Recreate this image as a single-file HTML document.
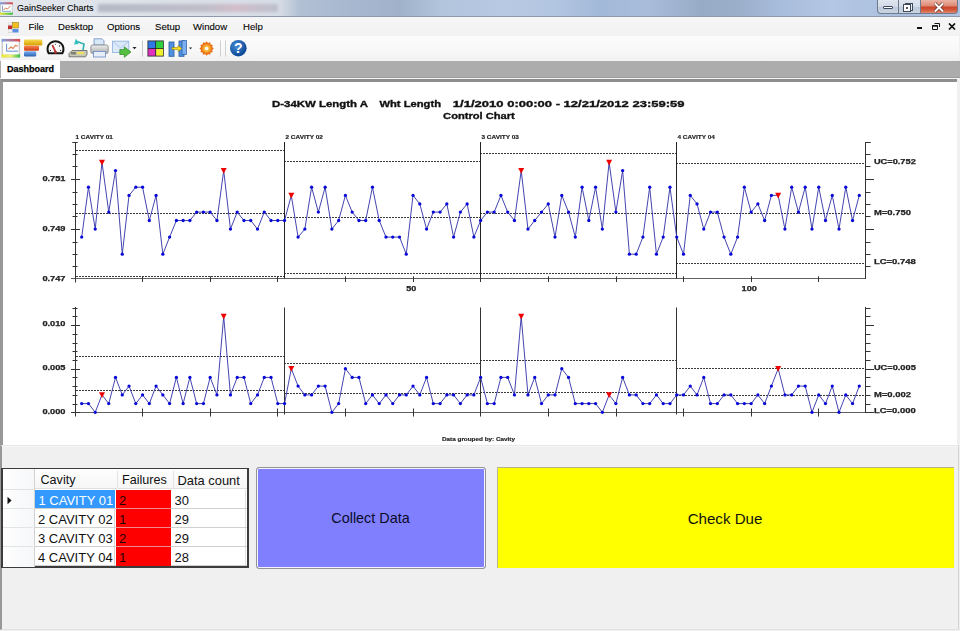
<!DOCTYPE html>
<html><head><meta charset="utf-8">
<style>
*{margin:0;padding:0;box-sizing:border-box}
html,body{width:960px;height:631px;overflow:hidden;background:#f0f0f0;font-family:"Liberation Sans",sans-serif;position:relative}
.abs{position:absolute}
#titlebar{left:0;top:0;width:960px;height:17px;background:linear-gradient(90deg,#e2e6ec 0px,#dde2e9 150px,#d6dce5 280px,#b2c0d4 300px,#a9b9d0 340px,#a0b1ca 400px,#b2c4dc 440px,#b8cae3 500px,#b3c6e1 555px,#a3b9d9 600px,#a9bddb 650px,#98abc6 700px,#9cafca 740px,#a8bcdc 780px,#b4c7e3 830px,#aabfe0 900px,#b0c4e2 960px);border-bottom:1px solid #8e9aab}
#title{left:17px;top:3px;font-size:9px;color:#000;-webkit-text-stroke:.1px #000}
#menubar{left:0;top:17px;width:960px;height:19px;background:linear-gradient(#f6f6f6,#f2f2f2)}
.mi{position:absolute;top:4px;font-size:9.6px;color:#000;line-height:11px;-webkit-text-stroke:.1px #000}
#toolbar{left:0;top:36px;width:959px;height:25px;background:linear-gradient(#fcfcfc,#f8f8f8 60%,#f1f1f1);border-radius:0 0 3px 0}
#tabstrip{left:0;top:61px;width:960px;height:17px;background:#acacac;border-bottom:1px solid #9c9c9c}
#tabline{left:0;top:78px;width:960px;height:1px;background:#f4f4f4}
#tab{left:1px;top:60px;width:59px;height:19px;background:#fff;font-weight:bold;font-size:9px;padding:4px 0 0 6px;color:#000;line-height:11px;-webkit-text-stroke:.25px #000}
#panel{left:0;top:79px;width:957px;height:366px;border-top:3px solid #8e8e8e;border-left:3px solid #989898;background:#fff}
#bottom{left:0;top:445px;width:959px;height:185px;background:#f0f0f0;border-top:1px solid #e8e8e8;box-shadow:inset 0 1px 0 #f6f6f6;border-left:2px solid #989898;border-right:1px solid #d4d4d4;border-bottom:1px solid #e2e2e2}
#grid{left:1px;top:468px;width:248px;height:100px;border:2px solid #3c3c3c;border-width:1px 2px 2px 2px;background:#fff;font-size:12.6px;color:#111}
.cell{position:absolute;height:19px;line-height:19px;white-space:nowrap;overflow:hidden}
#collect{left:256px;top:467px;width:230px;height:102px;border:1px solid #939393;border-radius:3px;background:#8080ff;box-shadow:inset 0 0 0 1px #f4f4ff;font-size:14.4px;color:#0a0a2a;text-align:center;line-height:100px;padding-right:1px}
#due{left:497px;top:467px;width:457px;height:101px;background:#ffff00;border-top:1px solid #b4b488;border-left:1px solid #b8b890;font-size:15.1px;color:#111;text-align:center;line-height:101px;padding-right:2px}
.wb{position:absolute;top:0;height:14px;border:1px solid #6f7b8a;border-top:none}
</style></head><body>
<div id="titlebar" class="abs"></div>
<svg class="abs" style="left:0;top:2px" width="14" height="13" viewBox="0 0 14 13">
 <defs><linearGradient id="ib" x1="0" y1="0" x2="1" y2="0"><stop offset="0" stop-color="#7aa2e6"/><stop offset="1" stop-color="#e04848"/></linearGradient>
 <linearGradient id="ib2" x1="0" y1="0" x2="1" y2="0"><stop offset="0" stop-color="#e8e830"/><stop offset="1" stop-color="#30c040"/></linearGradient></defs>
 <rect x="0" y="0.3" width="12.8" height="12.4" rx="1" fill="#c8ccd0"/>
 <rect x="0" y="0.3" width="12.8" height="2.2" fill="url(#ib)"/>
 <rect x="0" y="10.5" width="12.8" height="2.2" fill="url(#ib2)"/>
 <rect x="1" y="2.5" width="10.8" height="8" fill="#fdfdfd"/>
 <path d="M3.5 8 L5.5 6 L7.5 7 L10.5 4" fill="none" stroke="#d07040" stroke-width=".9"/>
 <path d="M2.5 3.5 V9.3 H11" fill="none" stroke="#5080c0" stroke-width=".7"/>
</svg>
<div id="title" class="abs">GainSeeker Charts</div>
<div class="abs" style="left:98px;top:4px;width:180px;height:8px;background:linear-gradient(90deg,rgba(130,135,150,.45),rgba(150,140,160,.4) 60%,rgba(200,130,150,.35) 75%,rgba(150,150,170,.4));filter:blur(1.6px)"></div>
<div class="wb" style="left:877px;width:22px;border-radius:0 0 0 4px;background:linear-gradient(#dfe6ef,#d2dbe7 50%,#bccadb 55%,#c8d4e2)"></div>
<div class="wb" style="left:898px;width:23px;background:linear-gradient(#dfe6ef,#d2dbe7 50%,#bccadb 55%,#c8d4e2)"></div>
<div class="wb" style="left:920px;width:38px;border-radius:0 0 4px 0;background:linear-gradient(#eab4a6,#de8a74 45%,#c8442a 55%,#d65d40 80%,#e08a70)"></div>
<div class="abs" style="left:883px;top:6px;width:10px;height:3px;border:1px solid #3e4a5c;background:#fff;border-radius:1px"></div>
<div class="abs" style="left:905px;top:3px;width:8px;height:8px;border:1px solid #3e4a5c;background:#e8eef5"></div>
<div class="abs" style="left:903px;top:4px;width:8px;height:8px;border:1px solid #3e4a5c;background:#fff"><div class="abs" style="left:2px;top:2px;width:2px;height:2px;background:#556"></div></div>
<svg class="abs" style="left:932px;top:2px" width="14" height="11" viewBox="0 0 14 11"><path d="M3 1.5 L11 9.5 M11 1.5 L3 9.5" stroke="#5a2a20" stroke-width="3.2"/><path d="M3 1.5 L11 9.5 M11 1.5 L3 9.5" stroke="#fff" stroke-width="2"/></svg>
<div id="menubar" class="abs">
 <svg class="abs" style="left:8px;top:4.5px" width="11" height="11" viewBox="0 0 11 11">
  <rect x="0" y="0" width="4" height="3" fill="#f4f4f4" stroke="#c0c0c0" stroke-width=".5"/>
  <rect x="0" y="3.5" width="4" height="3.5" fill="#c03030"/>
  <rect x="0" y="7.5" width="4" height="3" fill="#f4f4f4" stroke="#c0c0c0" stroke-width=".5"/>
  <rect x="4.5" y="0.5" width="6" height="5.5" fill="#f0c020" stroke="#a08020" stroke-width=".6"/>
  <rect x="4.5" y="7" width="6" height="3.5" fill="#5a8ee0"/>
 </svg>
 <span class="mi" style="left:28.5px">File</span>
 <span class="mi" style="left:58px">Desktop</span>
 <span class="mi" style="left:107px">Options</span>
 <span class="mi" style="left:155px">Setup</span>
 <span class="mi" style="left:193px">Window</span>
 <span class="mi" style="left:243px">Help</span>
 <div class="abs" style="left:917px;top:10px;width:5px;height:2px;background:#111"></div>
 <svg class="abs" style="left:932px;top:6px" width="8" height="7" viewBox="0 0 8 7"><path d="M2.5 .5 H7.5 V4 M.5 2.5 H5.5 V6.5 H.5 Z" fill="none" stroke="#111" stroke-width="1"/><path d="M.5 3 H5.5" stroke="#111" stroke-width="1.4"/></svg>
 <svg class="abs" style="left:948px;top:6px" width="8" height="7" viewBox="0 0 8 7"><path d="M1 .5 L7 6.5 M7 .5 L1 6.5" stroke="#111" stroke-width="1.7"/></svg>
</div>
<div id="toolbar" class="abs"></div>
<svg class="abs" style="left:0;top:36px" width="260" height="25" viewBox="0 36 260 25">
<defs>
 <linearGradient id="t1" x1="0" y1="0" x2="1" y2="0"><stop offset="0" stop-color="#7aa2e6"/><stop offset="1" stop-color="#e04848"/></linearGradient>
 <linearGradient id="t1b" x1="0" y1="0" x2="1" y2="0"><stop offset="0" stop-color="#e8e830"/><stop offset=".5" stop-color="#f0f080"/><stop offset="1" stop-color="#30c040"/></linearGradient>
 <linearGradient id="ty" x1="0" y1="0" x2="0" y2="1"><stop offset="0" stop-color="#f6d850"/><stop offset="1" stop-color="#d8a000"/></linearGradient>
 <linearGradient id="to" x1="0" y1="0" x2="0" y2="1"><stop offset="0" stop-color="#f88050"/><stop offset="1" stop-color="#d03c10"/></linearGradient>
 <linearGradient id="tb" x1="0" y1="0" x2="0" y2="1"><stop offset="0" stop-color="#80b0f0"/><stop offset="1" stop-color="#2860b0"/></linearGradient>
 <linearGradient id="tp" x1="0" y1="0" x2="0" y2="1"><stop offset="0" stop-color="#f0f0f0"/><stop offset="1" stop-color="#a8a8a8"/></linearGradient>
 <radialGradient id="ts" cx=".5" cy=".5" r=".5"><stop offset=".22" stop-color="#fff"/><stop offset=".4" stop-color="#fcc040"/><stop offset="1" stop-color="#e87010"/></radialGradient>
 <radialGradient id="th" cx=".4" cy=".35" r=".6"><stop offset="0" stop-color="#4a90d8"/><stop offset="1" stop-color="#0d4a98"/></radialGradient>
</defs>
<!-- icon1 chart -->
<rect x="1.6" y="38.9" width="18.5" height="18.6" rx="1" fill="#c8c8c8"/>
<rect x="1.6" y="38.9" width="18.5" height="3" fill="url(#t1)"/>
<rect x="1.6" y="54.3" width="18.5" height="3.2" fill="url(#t1b)"/>
<rect x="3" y="41.5" width="15.7" height="12.8" fill="#fdfdfd"/>
<path d="M6.6 43.8 V51.2 H18" fill="none" stroke="#5f8fd0" stroke-width="1"/>
<path d="M8.5 49.2 L11 47 L13 48.5 L15.5 45.5 L17.8 46.2" fill="none" stroke="#d88050" stroke-width="1.1"/>
<!-- icon2 bars -->
<rect x="24" y="39.6" width="18.3" height="5.8" rx="1.2" fill="url(#ty)"/>
<rect x="24" y="45.8" width="15" height="5" rx="1.2" fill="url(#to)"/>
<rect x="24" y="51.2" width="12.2" height="5.3" rx="1.2" fill="url(#tb)"/>
<!-- icon3 gauge -->
<path d="M48.6 53.2 A8 8 0 1 1 62.4 53.2 Z" fill="#fafafa" stroke="#151515" stroke-width="2"/>
<path d="M52.3 45 L55.8 52.3" stroke="#c03838" stroke-width="1.8"/>
<circle cx="55.5" cy="52.2" r="1.5" fill="#a03030"/>
<circle cx="50.5" cy="50.5" r=".7" fill="#333"/><circle cx="60.5" cy="50.5" r=".7" fill="#333"/><circle cx="59.5" cy="46" r=".7" fill="#333"/><circle cx="55.5" cy="44.3" r=".6" fill="#555"/>
<!-- icon4 scanner -->
<path d="M69 53.5 L72 50.5 H87 V54.5 L85.5 56.8 H69 Z" fill="#c8c8b8" stroke="#606060" stroke-width=".8"/>
<rect x="71" y="52" width="5" height="2.5" fill="#808070"/>
<rect x="77" y="52" width="7" height="2.2" fill="#f0e060"/>
<path d="M76 41 L81 43 L84 44 L83 50" fill="none" stroke="#30b0b0" stroke-width="1.6"/>
<path d="M74 44.5 L76 38.5 L78.5 44 Z" fill="#30c0c0"/>
<!-- icon5 printer -->
<path d="M94 38.8 H102 L104 40.8 V45 H94 Z" fill="#d8e8f8" stroke="#7090c0" stroke-width=".8"/>
<rect x="90.8" y="45" width="17.4" height="8.5" rx="2" fill="url(#tp)" stroke="#808080" stroke-width=".8"/>
<rect x="93.5" y="51.5" width="12" height="5.5" fill="#e8eef8" stroke="#6a8ac8" stroke-width=".8"/>
<!-- icon6 mail -->
<rect x="112.5" y="41.2" width="16.3" height="11.3" fill="#dce9fa" stroke="#9dbbe3" stroke-width="1"/>
<path d="M112.8 41.5 L120.6 47.8 L128.5 41.5" fill="none" stroke="#a8c4ea" stroke-width=".9"/>
<path d="M119.8 49.6 H124.3 V46.8 L131 52 L124.3 57.3 V54.5 H119.8 Z" fill="#56c040" stroke="#2e8a2a" stroke-width=".7"/>
<path d="M132.5 47 H136.5 L134.5 49.3 Z" fill="#222"/>
<!-- separator -->
<rect x="142" y="40.5" width="1" height="16" fill="#c8c8c8"/>
<!-- icon squares -->
<rect x="147.5" y="40.5" width="16.3" height="16" fill="#222"/>
<rect x="148.3" y="41.3" width="7" height="6.8" fill="#2f78e8"/>
<rect x="156.1" y="41.3" width="7" height="6.8" fill="#30d040"/>
<rect x="148.3" y="48.9" width="7" height="6.8" fill="#e030c0"/>
<rect x="156.1" y="48.9" width="7" height="6.8" fill="#f0f030"/>
<!-- icon H -->
<rect x="169" y="42" width="5" height="14.3" fill="#5090e0" stroke="#2a5aa0" stroke-width=".8"/>
<rect x="179" y="41" width="5" height="15.3" fill="#5090e0" stroke="#2a5aa0" stroke-width=".8"/>
<rect x="182" y="40.5" width="4.5" height="14" fill="#7ab0f0" stroke="#2a5aa0" stroke-width=".7"/>
<path d="M172 47.5 H178 V45.5 L182 48.5 L178 51.5 V49.5 H172 Z" fill="#f0e020" stroke="#907000" stroke-width=".5"/>
<path d="M189 47.5 H192.2 L190.6 49.3 Z" fill="#222"/>
<!-- sun -->
<path d="M213.80 48.50 L212.01 49.95 L212.84 52.10 L210.56 52.46 L210.20 54.74 L208.05 53.91 L206.60 55.70 L205.15 53.91 L203.00 54.74 L202.64 52.46 L200.36 52.10 L201.19 49.95 L199.40 48.50 L201.19 47.05 L200.36 44.90 L202.64 44.54 L203.00 42.26 L205.15 43.09 L206.60 41.30 L208.05 43.09 L210.20 42.26 L210.56 44.54 L212.84 44.90 L212.01 47.05Z" fill="#e86a10"/>
<circle cx="206.6" cy="48.5" r="5.4" fill="url(#ts)"/>
<!-- separators -->
<rect x="220" y="40.5" width="1" height="16" fill="#d0d0d0"/>
<rect x="225" y="40.5" width="1" height="16" fill="#d0d0d0"/>
<!-- help -->
<circle cx="238.3" cy="48.2" r="8.3" fill="url(#th)"/>
<text x="238.3" y="53.3" font-size="14" font-weight="bold" fill="#fff" text-anchor="middle" font-family="Liberation Sans">?</text>
</svg>

<div id="tabstrip" class="abs"></div>
<div id="tabline" class="abs"></div>
<div id="tab" class="abs">Dashboard</div>
<div id="panel" class="abs"></div>
<div id="bottom" class="abs"></div>
<svg class="chart" width="960" height="631" viewBox="0 0 960 631" style="position:absolute;left:0;top:0;will-change:transform;font-family:'Liberation Sans',sans-serif"><line x1="76" y1="150.5" x2="284" y2="150.5" stroke="#3a3a3a" stroke-dasharray="2 1"/><line x1="76" y1="213.5" x2="284" y2="213.5" stroke="#3a3a3a" stroke-dasharray="2 1"/><line x1="76" y1="276.5" x2="284" y2="276.5" stroke="#3a3a3a" stroke-dasharray="2 1"/><line x1="76" y1="356.5" x2="284" y2="356.5" stroke="#3a3a3a" stroke-dasharray="2 1"/><line x1="76" y1="390.5" x2="284" y2="390.5" stroke="#3a3a3a" stroke-dasharray="2 1"/><line x1="284" y1="161.5" x2="480" y2="161.5" stroke="#3a3a3a" stroke-dasharray="2 1"/><line x1="284" y1="217.5" x2="480" y2="217.5" stroke="#3a3a3a" stroke-dasharray="2 1"/><line x1="284" y1="273.5" x2="480" y2="273.5" stroke="#3a3a3a" stroke-dasharray="2 1"/><line x1="284" y1="363.5" x2="480" y2="363.5" stroke="#3a3a3a" stroke-dasharray="2 1"/><line x1="284" y1="393.5" x2="480" y2="393.5" stroke="#3a3a3a" stroke-dasharray="2 1"/><line x1="480" y1="153.5" x2="676" y2="153.5" stroke="#3a3a3a" stroke-dasharray="2 1"/><line x1="480" y1="213.5" x2="676" y2="213.5" stroke="#3a3a3a" stroke-dasharray="2 1"/><line x1="480" y1="273.5" x2="676" y2="273.5" stroke="#3a3a3a" stroke-dasharray="2 1"/><line x1="480" y1="360.5" x2="676" y2="360.5" stroke="#3a3a3a" stroke-dasharray="2 1"/><line x1="480" y1="392.5" x2="676" y2="392.5" stroke="#3a3a3a" stroke-dasharray="2 1"/><line x1="676" y1="163.5" x2="866" y2="163.5" stroke="#3a3a3a" stroke-dasharray="2 1"/><line x1="676" y1="213.5" x2="866" y2="213.5" stroke="#3a3a3a" stroke-dasharray="2 1"/><line x1="676" y1="263.5" x2="866" y2="263.5" stroke="#3a3a3a" stroke-dasharray="2 1"/><line x1="676" y1="368.5" x2="866" y2="368.5" stroke="#3a3a3a" stroke-dasharray="2 1"/><line x1="676" y1="395.5" x2="866" y2="395.5" stroke="#3a3a3a" stroke-dasharray="2 1"/><line x1="71" y1="278.5" x2="865.5" y2="278.5" stroke="#606060"/><line x1="75.5" y1="142" x2="75.5" y2="282.5" stroke="#333333"/><line x1="865.5" y1="142" x2="865.5" y2="279" stroke="#333333"/><line x1="284.5" y1="142" x2="284.5" y2="278.5" stroke="#222"/><line x1="480.5" y1="142" x2="480.5" y2="278.5" stroke="#222"/><line x1="676.5" y1="142" x2="676.5" y2="278.5" stroke="#222"/><line x1="72.5" y1="142.5" x2="77.5" y2="142.5" stroke="#333333"/><line x1="865.5" y1="142.5" x2="870.5" y2="142.5" stroke="#333333"/><line x1="72.5" y1="154.5" x2="77.5" y2="154.5" stroke="#333333"/><line x1="865.5" y1="154.5" x2="870.5" y2="154.5" stroke="#333333"/><line x1="72.5" y1="166.5" x2="77.5" y2="166.5" stroke="#333333"/><line x1="865.5" y1="166.5" x2="870.5" y2="166.5" stroke="#333333"/><line x1="71" y1="179.5" x2="80" y2="179.5" stroke="#333333"/><line x1="865.5" y1="179.5" x2="874" y2="179.5" stroke="#333333"/><line x1="72.5" y1="192.5" x2="77.5" y2="192.5" stroke="#333333"/><line x1="865.5" y1="192.5" x2="870.5" y2="192.5" stroke="#333333"/><line x1="72.5" y1="204.5" x2="77.5" y2="204.5" stroke="#333333"/><line x1="865.5" y1="204.5" x2="870.5" y2="204.5" stroke="#333333"/><line x1="72.5" y1="216.5" x2="77.5" y2="216.5" stroke="#333333"/><line x1="865.5" y1="216.5" x2="870.5" y2="216.5" stroke="#333333"/><line x1="71" y1="229.5" x2="80" y2="229.5" stroke="#333333"/><line x1="865.5" y1="229.5" x2="874" y2="229.5" stroke="#333333"/><line x1="72.5" y1="242.5" x2="77.5" y2="242.5" stroke="#333333"/><line x1="865.5" y1="242.5" x2="870.5" y2="242.5" stroke="#333333"/><line x1="72.5" y1="254.5" x2="77.5" y2="254.5" stroke="#333333"/><line x1="865.5" y1="254.5" x2="870.5" y2="254.5" stroke="#333333"/><line x1="72.5" y1="266.5" x2="77.5" y2="266.5" stroke="#333333"/><line x1="865.5" y1="266.5" x2="870.5" y2="266.5" stroke="#333333"/><line x1="72.5" y1="142.5" x2="77.5" y2="142.5" stroke="#333333"/><line x1="865.5" y1="142.5" x2="870.5" y2="142.5" stroke="#333333"/><line x1="142.5" y1="276.3" x2="142.5" y2="282" stroke="#333333"/><line x1="210.5" y1="276.3" x2="210.5" y2="282" stroke="#333333"/><line x1="277.5" y1="276.3" x2="277.5" y2="282" stroke="#333333"/><line x1="345.5" y1="276.3" x2="345.5" y2="282" stroke="#333333"/><line x1="413.5" y1="276.3" x2="413.5" y2="282" stroke="#333333"/><line x1="480.5" y1="276.3" x2="480.5" y2="282" stroke="#333333"/><line x1="548.5" y1="276.3" x2="548.5" y2="282" stroke="#333333"/><line x1="616.5" y1="276.3" x2="616.5" y2="282" stroke="#333333"/><line x1="683.5" y1="276.3" x2="683.5" y2="282" stroke="#333333"/><line x1="751.5" y1="276.3" x2="751.5" y2="282" stroke="#333333"/><line x1="818.5" y1="276.3" x2="818.5" y2="282" stroke="#333333"/><line x1="71" y1="412.5" x2="865.5" y2="412.5" stroke="#606060"/><line x1="75.5" y1="307" x2="75.5" y2="416.5" stroke="#333333"/><line x1="865.5" y1="307" x2="865.5" y2="413" stroke="#333333"/><line x1="284.5" y1="307.5" x2="284.5" y2="414.5" stroke="#333"/><line x1="480.5" y1="307.5" x2="480.5" y2="414.5" stroke="#333"/><line x1="676.5" y1="307.5" x2="676.5" y2="414.5" stroke="#333"/><line x1="71" y1="412.5" x2="80" y2="412.5" stroke="#333333"/><line x1="865.5" y1="412.5" x2="874" y2="412.5" stroke="#333333"/><line x1="72.5" y1="404.5" x2="77.5" y2="404.5" stroke="#333333"/><line x1="865.5" y1="404.5" x2="870.5" y2="404.5" stroke="#333333"/><line x1="72.5" y1="395.5" x2="77.5" y2="395.5" stroke="#333333"/><line x1="865.5" y1="395.5" x2="870.5" y2="395.5" stroke="#333333"/><line x1="72.5" y1="386.5" x2="77.5" y2="386.5" stroke="#333333"/><line x1="865.5" y1="386.5" x2="870.5" y2="386.5" stroke="#333333"/><line x1="72.5" y1="377.5" x2="77.5" y2="377.5" stroke="#333333"/><line x1="865.5" y1="377.5" x2="870.5" y2="377.5" stroke="#333333"/><line x1="71" y1="369.5" x2="80" y2="369.5" stroke="#333333"/><line x1="865.5" y1="369.5" x2="874" y2="369.5" stroke="#333333"/><line x1="72.5" y1="360.5" x2="77.5" y2="360.5" stroke="#333333"/><line x1="865.5" y1="360.5" x2="870.5" y2="360.5" stroke="#333333"/><line x1="72.5" y1="351.5" x2="77.5" y2="351.5" stroke="#333333"/><line x1="865.5" y1="351.5" x2="870.5" y2="351.5" stroke="#333333"/><line x1="72.5" y1="343.5" x2="77.5" y2="343.5" stroke="#333333"/><line x1="865.5" y1="343.5" x2="870.5" y2="343.5" stroke="#333333"/><line x1="72.5" y1="334.5" x2="77.5" y2="334.5" stroke="#333333"/><line x1="865.5" y1="334.5" x2="870.5" y2="334.5" stroke="#333333"/><line x1="71" y1="325.5" x2="80" y2="325.5" stroke="#333333"/><line x1="865.5" y1="325.5" x2="874" y2="325.5" stroke="#333333"/><line x1="72.5" y1="316.5" x2="77.5" y2="316.5" stroke="#333333"/><line x1="865.5" y1="316.5" x2="870.5" y2="316.5" stroke="#333333"/><line x1="72.5" y1="308.5" x2="77.5" y2="308.5" stroke="#333333"/><line x1="865.5" y1="308.5" x2="870.5" y2="308.5" stroke="#333333"/><line x1="142.5" y1="408.5" x2="142.5" y2="416.5" stroke="#333333"/><line x1="210.5" y1="408.5" x2="210.5" y2="416.5" stroke="#333333"/><line x1="277.5" y1="408.5" x2="277.5" y2="416.5" stroke="#333333"/><line x1="345.5" y1="408.5" x2="345.5" y2="416.5" stroke="#333333"/><line x1="413.5" y1="408.5" x2="413.5" y2="416.5" stroke="#333333"/><line x1="480.5" y1="408.5" x2="480.5" y2="416.5" stroke="#333333"/><line x1="548.5" y1="408.5" x2="548.5" y2="416.5" stroke="#333333"/><line x1="616.5" y1="408.5" x2="616.5" y2="416.5" stroke="#333333"/><line x1="683.5" y1="408.5" x2="683.5" y2="416.5" stroke="#333333"/><line x1="751.5" y1="408.5" x2="751.5" y2="416.5" stroke="#333333"/><line x1="818.5" y1="408.5" x2="818.5" y2="416.5" stroke="#333333"/><polyline points="81.70,237.1 88.46,187.2 95.23,229.1 101.99,162.3 108.75,212.1 115.51,170.6 122.27,254.2 129.03,195.4 135.80,187.2 142.56,187.2 149.32,220.5 156.08,195.4 162.84,254.2 169.60,237.1 176.37,220.5 183.13,220.5 189.89,220.5 196.65,212.1 203.41,212.1 210.17,212.1 216.94,220.5 223.70,170.6 230.46,229.1 237.22,212.1 243.98,220.5 250.74,220.5 257.51,229.1 264.27,212.1 271.03,220.5 277.79,220.5 284.55,220.5 291.31,195.4 298.08,237.1 304.84,229.1 311.60,187.2 318.36,212.1 325.12,187.2 331.88,229.1 338.65,220.5 345.41,195.4 352.17,212.1 358.93,220.5 365.69,220.5 372.45,187.2 379.22,220.5 385.98,237.1 392.74,237.1 399.50,237.1 406.26,254.2 413.03,195.4 419.79,203.9 426.55,229.1 433.31,212.1 440.07,212.1 446.83,203.9 453.60,237.1 460.36,212.1 467.12,203.9 473.88,237.1 480.64,220.5 487.40,212.1 494.17,212.1 500.93,195.4 507.69,212.1 514.45,220.5 521.21,170.6 527.97,229.1 534.74,220.5 541.50,212.1 548.26,203.9 555.02,237.1 561.78,195.4 568.54,212.1 575.31,237.1 582.07,187.2 588.83,220.5 595.59,187.2 602.35,229.1 609.11,162.3 615.88,212.1 622.64,170.6 629.40,254.2 636.16,254.2 642.92,237.1 649.68,187.2 656.45,254.2 663.21,237.1 669.97,187.2 676.73,237.1 683.49,254.2 690.25,195.4 697.02,203.9 703.78,229.1 710.54,212.1 717.30,212.1 724.06,237.1 730.82,254.2 737.59,237.1 744.35,187.2 751.11,212.1 757.87,203.9 764.63,220.5 771.40,195.4 778.16,195.4 784.92,229.1 791.68,187.2 798.44,212.1 805.20,187.2 811.97,229.1 818.73,187.2 825.49,220.5 832.25,195.4 839.01,229.1 845.77,187.2 852.54,220.5 859.30,195.4" fill="none" stroke="#3a3aac" stroke-width="0.95"/><polyline points="81.70,403.6 88.46,403.6 95.23,412.3 101.99,394.9 108.75,403.6 115.51,377.4 122.27,394.9 129.03,386.1 135.80,403.6 142.56,394.9 149.32,403.6 156.08,386.1 162.84,394.9 169.60,403.6 176.37,377.4 183.13,403.6 189.89,377.4 196.65,403.6 203.41,403.6 210.17,377.4 216.94,394.9 223.70,316.4 230.46,394.9 237.22,377.4 243.98,377.4 250.74,403.6 257.51,394.9 264.27,377.4 271.03,377.4 277.79,403.6 284.55,403.6 291.31,368.7 298.08,386.1 304.84,394.9 311.60,394.9 318.36,386.1 325.12,386.1 331.88,412.3 338.65,403.6 345.41,368.7 352.17,377.4 358.93,377.4 365.69,403.6 372.45,394.9 379.22,403.6 385.98,394.9 392.74,403.6 399.50,394.9 406.26,394.9 413.03,386.1 419.79,394.9 426.55,377.4 433.31,403.6 440.07,403.6 446.83,394.9 453.60,394.9 460.36,403.6 467.12,394.9 473.88,394.9 480.64,377.4 487.40,403.6 494.17,403.6 500.93,377.4 507.69,377.4 514.45,394.9 521.21,316.4 527.97,394.9 534.74,377.4 541.50,403.6 548.26,394.9 555.02,394.9 561.78,368.7 568.54,377.4 575.31,403.6 582.07,403.6 588.83,403.6 595.59,403.6 602.35,412.3 609.11,394.9 615.88,403.6 622.64,377.4 629.40,394.9 636.16,394.9 642.92,403.6 649.68,403.6 656.45,394.9 663.21,403.6 669.97,403.6 676.73,394.9 683.49,394.9 690.25,386.1 697.02,394.9 703.78,377.4 710.54,403.6 717.30,403.6 724.06,394.9 730.82,394.9 737.59,403.6 744.35,403.6 751.11,403.6 757.87,394.9 764.63,403.6 771.40,386.1 778.16,368.7 784.92,394.9 791.68,394.9 798.44,386.1 805.20,386.1 811.97,412.3 818.73,394.9 825.49,403.6 832.25,386.1 839.01,412.3 845.77,394.9 852.54,403.6 859.30,386.1" fill="none" stroke="#3a3aac" stroke-width="0.95"/><circle cx="81.70" cy="237.1" r="1.65" fill="#0808d8"/><circle cx="81.70" cy="403.6" r="1.65" fill="#0808d8"/><circle cx="88.46" cy="187.2" r="1.65" fill="#0808d8"/><circle cx="88.46" cy="403.6" r="1.65" fill="#0808d8"/><circle cx="95.23" cy="229.1" r="1.65" fill="#0808d8"/><circle cx="95.23" cy="412.3" r="1.65" fill="#0808d8"/><circle cx="108.75" cy="212.1" r="1.65" fill="#0808d8"/><circle cx="108.75" cy="403.6" r="1.65" fill="#0808d8"/><circle cx="115.51" cy="170.6" r="1.65" fill="#0808d8"/><circle cx="115.51" cy="377.4" r="1.65" fill="#0808d8"/><circle cx="122.27" cy="254.2" r="1.65" fill="#0808d8"/><circle cx="122.27" cy="394.9" r="1.65" fill="#0808d8"/><circle cx="129.03" cy="195.4" r="1.65" fill="#0808d8"/><circle cx="129.03" cy="386.1" r="1.65" fill="#0808d8"/><circle cx="135.80" cy="187.2" r="1.65" fill="#0808d8"/><circle cx="135.80" cy="403.6" r="1.65" fill="#0808d8"/><circle cx="142.56" cy="187.2" r="1.65" fill="#0808d8"/><circle cx="142.56" cy="394.9" r="1.65" fill="#0808d8"/><circle cx="149.32" cy="220.5" r="1.65" fill="#0808d8"/><circle cx="149.32" cy="403.6" r="1.65" fill="#0808d8"/><circle cx="156.08" cy="195.4" r="1.65" fill="#0808d8"/><circle cx="156.08" cy="386.1" r="1.65" fill="#0808d8"/><circle cx="162.84" cy="254.2" r="1.65" fill="#0808d8"/><circle cx="162.84" cy="394.9" r="1.65" fill="#0808d8"/><circle cx="169.60" cy="237.1" r="1.65" fill="#0808d8"/><circle cx="169.60" cy="403.6" r="1.65" fill="#0808d8"/><circle cx="176.37" cy="220.5" r="1.65" fill="#0808d8"/><circle cx="176.37" cy="377.4" r="1.65" fill="#0808d8"/><circle cx="183.13" cy="220.5" r="1.65" fill="#0808d8"/><circle cx="183.13" cy="403.6" r="1.65" fill="#0808d8"/><circle cx="189.89" cy="220.5" r="1.65" fill="#0808d8"/><circle cx="189.89" cy="377.4" r="1.65" fill="#0808d8"/><circle cx="196.65" cy="212.1" r="1.65" fill="#0808d8"/><circle cx="196.65" cy="403.6" r="1.65" fill="#0808d8"/><circle cx="203.41" cy="212.1" r="1.65" fill="#0808d8"/><circle cx="203.41" cy="403.6" r="1.65" fill="#0808d8"/><circle cx="210.17" cy="212.1" r="1.65" fill="#0808d8"/><circle cx="210.17" cy="377.4" r="1.65" fill="#0808d8"/><circle cx="216.94" cy="220.5" r="1.65" fill="#0808d8"/><circle cx="216.94" cy="394.9" r="1.65" fill="#0808d8"/><circle cx="230.46" cy="229.1" r="1.65" fill="#0808d8"/><circle cx="230.46" cy="394.9" r="1.65" fill="#0808d8"/><circle cx="237.22" cy="212.1" r="1.65" fill="#0808d8"/><circle cx="237.22" cy="377.4" r="1.65" fill="#0808d8"/><circle cx="243.98" cy="220.5" r="1.65" fill="#0808d8"/><circle cx="243.98" cy="377.4" r="1.65" fill="#0808d8"/><circle cx="250.74" cy="220.5" r="1.65" fill="#0808d8"/><circle cx="250.74" cy="403.6" r="1.65" fill="#0808d8"/><circle cx="257.51" cy="229.1" r="1.65" fill="#0808d8"/><circle cx="257.51" cy="394.9" r="1.65" fill="#0808d8"/><circle cx="264.27" cy="212.1" r="1.65" fill="#0808d8"/><circle cx="264.27" cy="377.4" r="1.65" fill="#0808d8"/><circle cx="271.03" cy="220.5" r="1.65" fill="#0808d8"/><circle cx="271.03" cy="377.4" r="1.65" fill="#0808d8"/><circle cx="277.79" cy="220.5" r="1.65" fill="#0808d8"/><circle cx="277.79" cy="403.6" r="1.65" fill="#0808d8"/><circle cx="284.55" cy="220.5" r="1.65" fill="#0808d8"/><circle cx="284.55" cy="403.6" r="1.65" fill="#0808d8"/><circle cx="298.08" cy="237.1" r="1.65" fill="#0808d8"/><circle cx="298.08" cy="386.1" r="1.65" fill="#0808d8"/><circle cx="304.84" cy="229.1" r="1.65" fill="#0808d8"/><circle cx="304.84" cy="394.9" r="1.65" fill="#0808d8"/><circle cx="311.60" cy="187.2" r="1.65" fill="#0808d8"/><circle cx="311.60" cy="394.9" r="1.65" fill="#0808d8"/><circle cx="318.36" cy="212.1" r="1.65" fill="#0808d8"/><circle cx="318.36" cy="386.1" r="1.65" fill="#0808d8"/><circle cx="325.12" cy="187.2" r="1.65" fill="#0808d8"/><circle cx="325.12" cy="386.1" r="1.65" fill="#0808d8"/><circle cx="331.88" cy="229.1" r="1.65" fill="#0808d8"/><circle cx="331.88" cy="412.3" r="1.65" fill="#0808d8"/><circle cx="338.65" cy="220.5" r="1.65" fill="#0808d8"/><circle cx="338.65" cy="403.6" r="1.65" fill="#0808d8"/><circle cx="345.41" cy="195.4" r="1.65" fill="#0808d8"/><circle cx="345.41" cy="368.7" r="1.65" fill="#0808d8"/><circle cx="352.17" cy="212.1" r="1.65" fill="#0808d8"/><circle cx="352.17" cy="377.4" r="1.65" fill="#0808d8"/><circle cx="358.93" cy="220.5" r="1.65" fill="#0808d8"/><circle cx="358.93" cy="377.4" r="1.65" fill="#0808d8"/><circle cx="365.69" cy="220.5" r="1.65" fill="#0808d8"/><circle cx="365.69" cy="403.6" r="1.65" fill="#0808d8"/><circle cx="372.45" cy="187.2" r="1.65" fill="#0808d8"/><circle cx="372.45" cy="394.9" r="1.65" fill="#0808d8"/><circle cx="379.22" cy="220.5" r="1.65" fill="#0808d8"/><circle cx="379.22" cy="403.6" r="1.65" fill="#0808d8"/><circle cx="385.98" cy="237.1" r="1.65" fill="#0808d8"/><circle cx="385.98" cy="394.9" r="1.65" fill="#0808d8"/><circle cx="392.74" cy="237.1" r="1.65" fill="#0808d8"/><circle cx="392.74" cy="403.6" r="1.65" fill="#0808d8"/><circle cx="399.50" cy="237.1" r="1.65" fill="#0808d8"/><circle cx="399.50" cy="394.9" r="1.65" fill="#0808d8"/><circle cx="406.26" cy="254.2" r="1.65" fill="#0808d8"/><circle cx="406.26" cy="394.9" r="1.65" fill="#0808d8"/><circle cx="413.03" cy="195.4" r="1.65" fill="#0808d8"/><circle cx="413.03" cy="386.1" r="1.65" fill="#0808d8"/><circle cx="419.79" cy="203.9" r="1.65" fill="#0808d8"/><circle cx="419.79" cy="394.9" r="1.65" fill="#0808d8"/><circle cx="426.55" cy="229.1" r="1.65" fill="#0808d8"/><circle cx="426.55" cy="377.4" r="1.65" fill="#0808d8"/><circle cx="433.31" cy="212.1" r="1.65" fill="#0808d8"/><circle cx="433.31" cy="403.6" r="1.65" fill="#0808d8"/><circle cx="440.07" cy="212.1" r="1.65" fill="#0808d8"/><circle cx="440.07" cy="403.6" r="1.65" fill="#0808d8"/><circle cx="446.83" cy="203.9" r="1.65" fill="#0808d8"/><circle cx="446.83" cy="394.9" r="1.65" fill="#0808d8"/><circle cx="453.60" cy="237.1" r="1.65" fill="#0808d8"/><circle cx="453.60" cy="394.9" r="1.65" fill="#0808d8"/><circle cx="460.36" cy="212.1" r="1.65" fill="#0808d8"/><circle cx="460.36" cy="403.6" r="1.65" fill="#0808d8"/><circle cx="467.12" cy="203.9" r="1.65" fill="#0808d8"/><circle cx="467.12" cy="394.9" r="1.65" fill="#0808d8"/><circle cx="473.88" cy="237.1" r="1.65" fill="#0808d8"/><circle cx="473.88" cy="394.9" r="1.65" fill="#0808d8"/><circle cx="480.64" cy="220.5" r="1.65" fill="#0808d8"/><circle cx="480.64" cy="377.4" r="1.65" fill="#0808d8"/><circle cx="487.40" cy="212.1" r="1.65" fill="#0808d8"/><circle cx="487.40" cy="403.6" r="1.65" fill="#0808d8"/><circle cx="494.17" cy="212.1" r="1.65" fill="#0808d8"/><circle cx="494.17" cy="403.6" r="1.65" fill="#0808d8"/><circle cx="500.93" cy="195.4" r="1.65" fill="#0808d8"/><circle cx="500.93" cy="377.4" r="1.65" fill="#0808d8"/><circle cx="507.69" cy="212.1" r="1.65" fill="#0808d8"/><circle cx="507.69" cy="377.4" r="1.65" fill="#0808d8"/><circle cx="514.45" cy="220.5" r="1.65" fill="#0808d8"/><circle cx="514.45" cy="394.9" r="1.65" fill="#0808d8"/><circle cx="527.97" cy="229.1" r="1.65" fill="#0808d8"/><circle cx="527.97" cy="394.9" r="1.65" fill="#0808d8"/><circle cx="534.74" cy="220.5" r="1.65" fill="#0808d8"/><circle cx="534.74" cy="377.4" r="1.65" fill="#0808d8"/><circle cx="541.50" cy="212.1" r="1.65" fill="#0808d8"/><circle cx="541.50" cy="403.6" r="1.65" fill="#0808d8"/><circle cx="548.26" cy="203.9" r="1.65" fill="#0808d8"/><circle cx="548.26" cy="394.9" r="1.65" fill="#0808d8"/><circle cx="555.02" cy="237.1" r="1.65" fill="#0808d8"/><circle cx="555.02" cy="394.9" r="1.65" fill="#0808d8"/><circle cx="561.78" cy="195.4" r="1.65" fill="#0808d8"/><circle cx="561.78" cy="368.7" r="1.65" fill="#0808d8"/><circle cx="568.54" cy="212.1" r="1.65" fill="#0808d8"/><circle cx="568.54" cy="377.4" r="1.65" fill="#0808d8"/><circle cx="575.31" cy="237.1" r="1.65" fill="#0808d8"/><circle cx="575.31" cy="403.6" r="1.65" fill="#0808d8"/><circle cx="582.07" cy="187.2" r="1.65" fill="#0808d8"/><circle cx="582.07" cy="403.6" r="1.65" fill="#0808d8"/><circle cx="588.83" cy="220.5" r="1.65" fill="#0808d8"/><circle cx="588.83" cy="403.6" r="1.65" fill="#0808d8"/><circle cx="595.59" cy="187.2" r="1.65" fill="#0808d8"/><circle cx="595.59" cy="403.6" r="1.65" fill="#0808d8"/><circle cx="602.35" cy="229.1" r="1.65" fill="#0808d8"/><circle cx="602.35" cy="412.3" r="1.65" fill="#0808d8"/><circle cx="615.88" cy="212.1" r="1.65" fill="#0808d8"/><circle cx="615.88" cy="403.6" r="1.65" fill="#0808d8"/><circle cx="622.64" cy="170.6" r="1.65" fill="#0808d8"/><circle cx="622.64" cy="377.4" r="1.65" fill="#0808d8"/><circle cx="629.40" cy="254.2" r="1.65" fill="#0808d8"/><circle cx="629.40" cy="394.9" r="1.65" fill="#0808d8"/><circle cx="636.16" cy="254.2" r="1.65" fill="#0808d8"/><circle cx="636.16" cy="394.9" r="1.65" fill="#0808d8"/><circle cx="642.92" cy="237.1" r="1.65" fill="#0808d8"/><circle cx="642.92" cy="403.6" r="1.65" fill="#0808d8"/><circle cx="649.68" cy="187.2" r="1.65" fill="#0808d8"/><circle cx="649.68" cy="403.6" r="1.65" fill="#0808d8"/><circle cx="656.45" cy="254.2" r="1.65" fill="#0808d8"/><circle cx="656.45" cy="394.9" r="1.65" fill="#0808d8"/><circle cx="663.21" cy="237.1" r="1.65" fill="#0808d8"/><circle cx="663.21" cy="403.6" r="1.65" fill="#0808d8"/><circle cx="669.97" cy="187.2" r="1.65" fill="#0808d8"/><circle cx="669.97" cy="403.6" r="1.65" fill="#0808d8"/><circle cx="676.73" cy="237.1" r="1.65" fill="#0808d8"/><circle cx="676.73" cy="394.9" r="1.65" fill="#0808d8"/><circle cx="683.49" cy="254.2" r="1.65" fill="#0808d8"/><circle cx="683.49" cy="394.9" r="1.65" fill="#0808d8"/><circle cx="690.25" cy="195.4" r="1.65" fill="#0808d8"/><circle cx="690.25" cy="386.1" r="1.65" fill="#0808d8"/><circle cx="697.02" cy="203.9" r="1.65" fill="#0808d8"/><circle cx="697.02" cy="394.9" r="1.65" fill="#0808d8"/><circle cx="703.78" cy="229.1" r="1.65" fill="#0808d8"/><circle cx="703.78" cy="377.4" r="1.65" fill="#0808d8"/><circle cx="710.54" cy="212.1" r="1.65" fill="#0808d8"/><circle cx="710.54" cy="403.6" r="1.65" fill="#0808d8"/><circle cx="717.30" cy="212.1" r="1.65" fill="#0808d8"/><circle cx="717.30" cy="403.6" r="1.65" fill="#0808d8"/><circle cx="724.06" cy="237.1" r="1.65" fill="#0808d8"/><circle cx="724.06" cy="394.9" r="1.65" fill="#0808d8"/><circle cx="730.82" cy="254.2" r="1.65" fill="#0808d8"/><circle cx="730.82" cy="394.9" r="1.65" fill="#0808d8"/><circle cx="737.59" cy="237.1" r="1.65" fill="#0808d8"/><circle cx="737.59" cy="403.6" r="1.65" fill="#0808d8"/><circle cx="744.35" cy="187.2" r="1.65" fill="#0808d8"/><circle cx="744.35" cy="403.6" r="1.65" fill="#0808d8"/><circle cx="751.11" cy="212.1" r="1.65" fill="#0808d8"/><circle cx="751.11" cy="403.6" r="1.65" fill="#0808d8"/><circle cx="757.87" cy="203.9" r="1.65" fill="#0808d8"/><circle cx="757.87" cy="394.9" r="1.65" fill="#0808d8"/><circle cx="764.63" cy="220.5" r="1.65" fill="#0808d8"/><circle cx="764.63" cy="403.6" r="1.65" fill="#0808d8"/><circle cx="771.40" cy="195.4" r="1.65" fill="#0808d8"/><circle cx="771.40" cy="386.1" r="1.65" fill="#0808d8"/><circle cx="784.92" cy="229.1" r="1.65" fill="#0808d8"/><circle cx="784.92" cy="394.9" r="1.65" fill="#0808d8"/><circle cx="791.68" cy="187.2" r="1.65" fill="#0808d8"/><circle cx="791.68" cy="394.9" r="1.65" fill="#0808d8"/><circle cx="798.44" cy="212.1" r="1.65" fill="#0808d8"/><circle cx="798.44" cy="386.1" r="1.65" fill="#0808d8"/><circle cx="805.20" cy="187.2" r="1.65" fill="#0808d8"/><circle cx="805.20" cy="386.1" r="1.65" fill="#0808d8"/><circle cx="811.97" cy="229.1" r="1.65" fill="#0808d8"/><circle cx="811.97" cy="412.3" r="1.65" fill="#0808d8"/><circle cx="818.73" cy="187.2" r="1.65" fill="#0808d8"/><circle cx="818.73" cy="394.9" r="1.65" fill="#0808d8"/><circle cx="825.49" cy="220.5" r="1.65" fill="#0808d8"/><circle cx="825.49" cy="403.6" r="1.65" fill="#0808d8"/><circle cx="832.25" cy="195.4" r="1.65" fill="#0808d8"/><circle cx="832.25" cy="386.1" r="1.65" fill="#0808d8"/><circle cx="839.01" cy="229.1" r="1.65" fill="#0808d8"/><circle cx="839.01" cy="412.3" r="1.65" fill="#0808d8"/><circle cx="845.77" cy="187.2" r="1.65" fill="#0808d8"/><circle cx="845.77" cy="394.9" r="1.65" fill="#0808d8"/><circle cx="852.54" cy="220.5" r="1.65" fill="#0808d8"/><circle cx="852.54" cy="403.6" r="1.65" fill="#0808d8"/><circle cx="859.30" cy="195.4" r="1.65" fill="#0808d8"/><circle cx="859.30" cy="386.1" r="1.65" fill="#0808d8"/><path d="M288.31 192.8 H294.31 L291.31 198.5Z" fill="#ee0000"/><path d="M518.21 168.0 H524.21 L521.21 173.7Z" fill="#ee0000"/><path d="M98.99 159.7 H104.99 L101.99 165.4Z" fill="#ee0000"/><path d="M220.70 168.0 H226.70 L223.70 173.7Z" fill="#ee0000"/><path d="M775.16 192.8 H781.16 L778.16 198.5Z" fill="#ee0000"/><path d="M606.11 159.7 H612.11 L609.11 165.4Z" fill="#ee0000"/><path d="M288.31 366.1 H294.31 L291.31 371.8Z" fill="#ee0000"/><path d="M518.21 313.8 H524.21 L521.21 319.5Z" fill="#ee0000"/><path d="M98.99 392.3 H104.99 L101.99 398.0Z" fill="#ee0000"/><path d="M220.70 313.8 H226.70 L223.70 319.5Z" fill="#ee0000"/><path d="M775.16 366.1 H781.16 L778.16 371.8Z" fill="#ee0000"/><path d="M606.11 392.3 H612.11 L609.11 398.0Z" fill="#ee0000"/><text x="272" y="106.6" font-size="9.6" font-weight="bold" text-anchor="start" fill="#111" stroke="#111" stroke-width="0.35" textLength="96" lengthAdjust="spacingAndGlyphs">D-34KW Length A</text><text x="379.4" y="106.6" font-size="9.6" font-weight="bold" text-anchor="start" fill="#111" stroke="#111" stroke-width="0.35" textLength="61.6" lengthAdjust="spacingAndGlyphs">Wht Length</text><text x="452.8" y="106.6" font-size="9.6" font-weight="bold" text-anchor="start" fill="#111" stroke="#111" stroke-width="0.35" textLength="231.8" lengthAdjust="spacingAndGlyphs">1/1/2010 0:00:00 - 12/21/2012 23:59:59</text><text x="443.1" y="119.0" font-size="9.6" font-weight="bold" text-anchor="start" fill="#111" stroke="#111" stroke-width="0.35" textLength="71.7" lengthAdjust="spacingAndGlyphs">Control Chart</text><text x="75.5" y="139.2" font-size="5.8" font-weight="bold" text-anchor="start" fill="#222" stroke="#222" stroke-width="0.18" textLength="37.3" lengthAdjust="spacingAndGlyphs">1 CAVITY 01</text><text x="285.5" y="139.2" font-size="5.8" font-weight="bold" text-anchor="start" fill="#222" stroke="#222" stroke-width="0.18" textLength="37.3" lengthAdjust="spacingAndGlyphs">2 CAVITY 02</text><text x="481.5" y="139.2" font-size="5.8" font-weight="bold" text-anchor="start" fill="#222" stroke="#222" stroke-width="0.18" textLength="37.3" lengthAdjust="spacingAndGlyphs">3 CAVITY 03</text><text x="677.5" y="139.2" font-size="5.8" font-weight="bold" text-anchor="start" fill="#222" stroke="#222" stroke-width="0.18" textLength="37.3" lengthAdjust="spacingAndGlyphs">4 CAVITY 04</text><text x="42.4" y="180.9" font-size="7.3" font-weight="bold" text-anchor="start" fill="#222" stroke="#222" stroke-width="0.25" textLength="23.1" lengthAdjust="spacingAndGlyphs">0.751</text><text x="42.4" y="231.0" font-size="7.3" font-weight="bold" text-anchor="start" fill="#222" stroke="#222" stroke-width="0.25" textLength="23.1" lengthAdjust="spacingAndGlyphs">0.749</text><text x="42.4" y="280.6" font-size="7.3" font-weight="bold" text-anchor="start" fill="#222" stroke="#222" stroke-width="0.25" textLength="23.1" lengthAdjust="spacingAndGlyphs">0.747</text><text x="42.4" y="325.9" font-size="7.3" font-weight="bold" text-anchor="start" fill="#222" stroke="#222" stroke-width="0.25" textLength="23.1" lengthAdjust="spacingAndGlyphs">0.010</text><text x="42.4" y="370.3" font-size="7.3" font-weight="bold" text-anchor="start" fill="#222" stroke="#222" stroke-width="0.25" textLength="23.1" lengthAdjust="spacingAndGlyphs">0.005</text><text x="42.4" y="413.8" font-size="7.3" font-weight="bold" text-anchor="start" fill="#222" stroke="#222" stroke-width="0.25" textLength="23.1" lengthAdjust="spacingAndGlyphs">0.000</text><text x="406.3" y="290.5" font-size="7.4" font-weight="bold" text-anchor="start" fill="#222" stroke="#222" stroke-width="0.25" textLength="10" lengthAdjust="spacingAndGlyphs">50</text><text x="741.6" y="290.6" font-size="7.4" font-weight="bold" text-anchor="start" fill="#222" stroke="#222" stroke-width="0.25" textLength="15.3" lengthAdjust="spacingAndGlyphs">100</text><text x="873.9" y="164.4" font-size="7.5" font-weight="bold" text-anchor="start" fill="#222" stroke="#222" stroke-width="0.25" textLength="41.9" lengthAdjust="spacingAndGlyphs">UC=0.752</text><text x="873.9" y="214.9" font-size="7.5" font-weight="bold" text-anchor="start" fill="#222" stroke="#222" stroke-width="0.25" textLength="37.1" lengthAdjust="spacingAndGlyphs">M=0.750</text><text x="873.9" y="264.2" font-size="7.5" font-weight="bold" text-anchor="start" fill="#222" stroke="#222" stroke-width="0.25" textLength="41.9" lengthAdjust="spacingAndGlyphs">LC=0.748</text><text x="873.9" y="369.6" font-size="7.5" font-weight="bold" text-anchor="start" fill="#222" stroke="#222" stroke-width="0.25" textLength="41.9" lengthAdjust="spacingAndGlyphs">UC=0.005</text><text x="873.9" y="397.2" font-size="7.5" font-weight="bold" text-anchor="start" fill="#222" stroke="#222" stroke-width="0.25" textLength="37.1" lengthAdjust="spacingAndGlyphs">M=0.002</text><text x="873.9" y="413.0" font-size="7.5" font-weight="bold" text-anchor="start" fill="#222" stroke="#222" stroke-width="0.25" textLength="41.9" lengthAdjust="spacingAndGlyphs">LC=0.000</text><text x="442" y="441.4" font-size="6" font-weight="bold" text-anchor="start" fill="#222" stroke="#222" stroke-width="0.18" textLength="73" lengthAdjust="spacingAndGlyphs">Data grouped by: Cavity</text></svg>
<div id="grid" class="abs">
 <div class="abs" style="left:0;top:0;width:244px;height:20px;background:linear-gradient(#fefefe,#f6f6f6);border-bottom:1px solid #dedede"></div>
 <div class="abs" style="left:0;top:0;width:32px;height:98px;background:linear-gradient(90deg,#fefefe,#f6f7f9);border-right:1px solid #d2d2d2"></div>
 <div class="abs" style="left:0;top:20px;width:31px;height:1px;background:#e2e2e2"></div>
 <div class="abs" style="left:114px;top:2px;width:1px;height:18px;background:#e4e4e4"></div>
 <div class="abs" style="left:170px;top:2px;width:1px;height:18px;background:#e4e4e4"></div>
 <div class="cell" style="left:37.5px;top:2px">Cavity</div>
 <div class="cell" style="left:119px;top:2px">Failures</div>
 <div class="cell" style="left:174.5px;top:2px;font-size:12.9px">Data count</div>
 <div class="abs" style="left:32px;top:39px;width:212px;height:1px;background:#d0d0d0"></div><div class="abs" style="left:0;top:39px;width:30px;height:1px;background:#e2e4e8"></div><div class="abs" style="left:111px;top:21px;width:1px;height:18px;background:#d6d6d6"></div><div class="abs" style="left:167px;top:21px;width:1px;height:18px;background:#d6d6d6"></div><div class="abs" style="left:241.5px;top:21px;width:1px;height:18px;background:#e0e0e0"></div><div class="abs" style="left:32px;top:21px;width:80px;height:18px;background:#3399ff"></div><div class="abs" style="left:113px;top:21px;width:55px;height:19px;background:#ff0000"></div><div class="abs" style="left:113px;top:39px;width:55px;height:1px;background:#f08a8a"></div><div class="cell" style="left:35.5px;top:22px;color:#fff;font-size:13px">1 CAVITY 01</div><div class="cell" style="left:116px;top:22px;color:#220000;font-size:13px">2</div><div class="cell" style="left:171.5px;top:22px;font-size:13px">30</div><div class="abs" style="left:32px;top:58px;width:212px;height:1px;background:#d0d0d0"></div><div class="abs" style="left:0;top:58px;width:30px;height:1px;background:#e2e4e8"></div><div class="abs" style="left:111px;top:40px;width:1px;height:18px;background:#d6d6d6"></div><div class="abs" style="left:167px;top:40px;width:1px;height:18px;background:#d6d6d6"></div><div class="abs" style="left:241.5px;top:40px;width:1px;height:18px;background:#e0e0e0"></div><div class="abs" style="left:113px;top:40px;width:55px;height:19px;background:#ff0000"></div><div class="abs" style="left:113px;top:58px;width:55px;height:1px;background:#f08a8a"></div><div class="cell" style="left:35px;top:41px;color:#111;font-size:13px">2 CAVITY 02</div><div class="cell" style="left:116px;top:41px;color:#220000;font-size:13px">1</div><div class="cell" style="left:171.5px;top:41px;font-size:13px">29</div><div class="abs" style="left:32px;top:77px;width:212px;height:1px;background:#d0d0d0"></div><div class="abs" style="left:0;top:77px;width:30px;height:1px;background:#e2e4e8"></div><div class="abs" style="left:111px;top:59px;width:1px;height:18px;background:#d6d6d6"></div><div class="abs" style="left:167px;top:59px;width:1px;height:18px;background:#d6d6d6"></div><div class="abs" style="left:241.5px;top:59px;width:1px;height:18px;background:#e0e0e0"></div><div class="abs" style="left:113px;top:59px;width:55px;height:19px;background:#ff0000"></div><div class="abs" style="left:113px;top:77px;width:55px;height:1px;background:#f08a8a"></div><div class="cell" style="left:35px;top:60px;color:#111;font-size:13px">3 CAVITY 03</div><div class="cell" style="left:116px;top:60px;color:#220000;font-size:13px">2</div><div class="cell" style="left:171.5px;top:60px;font-size:13px">29</div><div class="abs" style="left:32px;top:96px;width:212px;height:1px;background:#d0d0d0"></div><div class="abs" style="left:111px;top:78px;width:1px;height:18px;background:#d6d6d6"></div><div class="abs" style="left:167px;top:78px;width:1px;height:18px;background:#d6d6d6"></div><div class="abs" style="left:241.5px;top:78px;width:1px;height:18px;background:#e0e0e0"></div><div class="abs" style="left:113px;top:78px;width:55px;height:19px;background:#ff0000"></div><div class="cell" style="left:35px;top:79px;color:#111;font-size:13px">4 CAVITY 04</div><div class="cell" style="left:116px;top:79px;color:#220000;font-size:13px">1</div><div class="cell" style="left:171.5px;top:79px;font-size:13px">28</div>
 <svg class="abs" style="left:4.3px;top:27.3px" width="6" height="9" viewBox="0 0 6 9"><path d="M0.5 0.8 L4.6 4.5 L0.5 8.2Z" fill="#111"/></svg>
</div>
<div id="collect" class="abs">Collect Data</div>
<div id="due" class="abs">Check Due</div>
</body></html>
